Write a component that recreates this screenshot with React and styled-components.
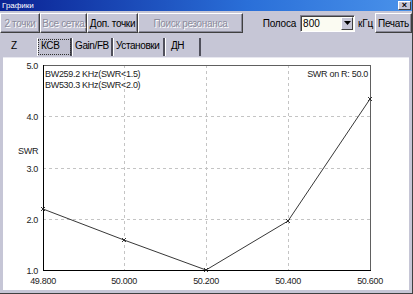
import React from "react";
import styled, { createGlobalStyle } from "styled-components";

const Global = createGlobalStyle`
  html, body { margin: 0; padding: 0; background: #c6c6d6; overflow: hidden; }
  #root { width: 413px; height: 294px; }
`;

const Window = styled.div`
  width: 413px;
  height: 294px;
  box-sizing: border-box;
  display: flex;
  flex-direction: column;
  background: #c6c6d6;
  border-right: 1px solid #404040;
  border-bottom: 1px solid #404040;
  font-family: "Liberation Sans", Arial, sans-serif;
  overflow: hidden;
`;

const TitleBar = styled.div`
  height: 11px;
  flex: none;
  display: flex;
  align-items: center;
  justify-content: space-between;
  padding: 0 1px 0 2px;
  background: linear-gradient(to right, #0a2294, #2a6fd8 60%, #4a92ea);
  color: #fff;
  font-size: 8px;
  line-height: 11px;
`;

const CloseButton = styled.div`
  width: 13px;
  height: 9px;
  box-sizing: border-box;
  background: #c6c6d6;
  border: 1px solid;
  border-color: #fff #404040 #404040 #fff;
  color: #000;
  font-size: 9px;
  font-weight: bold;
  line-height: 7px;
  text-align: center;
`;

const Toolbar = styled.div`
  height: 24px;
  flex: none;
  display: flex;
  align-items: center;
`;

const ToolButton = styled.div`
  width: ${(p) => p.$w}px;
  height: 20px;
  flex: none;
  box-sizing: border-box;
  display: flex;
  align-items: center;
  justify-content: center;
  border: 1px solid;
  border-color: #fff #404040 #404040 #fff;
  box-shadow: inset -1px -1px #8a8a9a;
  font-size: 10px;
  letter-spacing: -0.3px;
  white-space: nowrap;
  color: ${(p) => (p.$disabled ? "#8c8c9c" : "#000")};
  text-shadow: ${(p) => (p.$disabled ? "1px 1px 0 #fff" : "none")};
`;

const Spacer = styled.div`
  flex: 1;
`;

const Label = styled.span`
  font-size: 10px;
  letter-spacing: -0.2px;
  color: #000;
  margin: 0 ${(p) => p.$mr || 0}px 0 ${(p) => p.$ml || 0}px;
  white-space: nowrap;
`;

const Combo = styled.div`
  width: 55px;
  height: 17px;
  box-sizing: border-box;
  display: flex;
  border: 1px solid;
  border-color: #808090 #fff #fff #808090;
  box-shadow: inset 1px 1px #404040;
  background: #fbfbf2;
`;

const ComboText = styled.div`
  flex: 1;
  font-size: 10px;
  line-height: 15px;
  padding-left: 2px;
  color: #000;
`;

const ComboArrow = styled.div`
  width: 12px;
  margin: 1px 1px 1px 0;
  box-sizing: border-box;
  background: #c6c6d6;
  border: 1px solid;
  border-color: #fff #404040 #404040 #fff;
  display: flex;
  align-items: center;
  justify-content: center;
`;

const Tabs = styled.div`
  height: 18px;
  flex: none;
  margin-top: 3px;
  display: flex;
`;

const Tab = styled.div`
  width: ${(p) => p.$w}px;
  flex: none;
  box-sizing: border-box;
  padding-left: ${(p) => p.$pl}px;
  font-size: 10px;
  letter-spacing: -0.4px;
  line-height: 16px;
  white-space: nowrap;
  overflow: hidden;
  color: #000;
  border-right: ${(p) => (p.$sep ? "2px solid #50505c" : "none")};
  border-left: 1px solid ${(p) => (p.$first ? "transparent" : "#fff")};
  outline: ${(p) => (p.$active ? "1px dotted #303030" : "none")};
  outline-offset: -2px;
  background: ${(p) => (p.$active ? "#c0c0d0" : "transparent")};
`;

const Panel = styled.div`
  flex: 1;
  margin: 1px 3px 3px 3px;
  background: #fff;
  border-top: 1px solid #e8e8f0;
  box-sizing: border-box;
`;

const xs = [43, 124, 206, 288, 370];
const ys = [270, 219, 168, 116, 65];
const xLabels = ["49.800", "50.000", "50.200", "50.400", "50.600"];
const yLabels = ["1.0", "2.0", "3.0", "4.0", "5.0"];
const data = [
  [43, 209],
  [124, 240],
  [206, 270],
  [288, 221],
  [370, 99],
];

function Chart() {
  const pts = data.map((d) => d.join(",")).join(" ");
  return (
    <svg width="406" height="232" style={{ display: "block" }}>
      <g
        transform="translate(-3,-58)"
        fontFamily='"Liberation Sans", Arial, sans-serif'
        fontSize="9"
        letterSpacing="-0.3"
        fill="#222"
      >
        {xs.slice(1, 4).map((x) => (
          <line key={x} x1={x + 0.5} y1={65} x2={x + 0.5} y2={270} stroke="#c4c4c4" strokeDasharray="3,3" />
        ))}
        {ys.slice(1, 4).map((y) => (
          <line key={y} x1={43} y1={y + 0.5} x2={370} y2={y + 0.5} stroke="#c4c4c4" strokeDasharray="3,3" />
        ))}
        <rect x="43.5" y="65.5" width="327" height="205" fill="none" stroke="#606060" />
        <line x1="43.5" y1="65" x2="43.5" y2="271" stroke="#000" />
        <line x1="43" y1="270.5" x2="371" y2="270.5" stroke="#000" />
        <polyline points={pts} fill="none" stroke="#202020" strokeWidth="0.9" />
        {data.map(([x, y]) => (
          <path
            key={x}
            d={`M${x - 2},${y - 2}L${x + 2},${y + 2}M${x - 2},${y + 2}L${x + 2},${y - 2}`}
            stroke="#202020"
            strokeWidth="0.9"
          />
        ))}
        {yLabels.map((t, i) => (
          <text key={t} x="38" y={ys[i] + 3.5} textAnchor="end">{t}</text>
        ))}
        <text x="18" y="154">SWR</text>
        {xLabels.map((t, i) => (
          <text key={t} x={xs[i]} y="284" textAnchor="middle">{t}</text>
        ))}
        <text x="45" y="77">BW259.2 KHz(SWR&lt;1.5)</text>
        <text x="45" y="88">BW530.3 KHz(SWR&lt;2.0)</text>
        <text x="368" y="77" textAnchor="end">SWR on R: 50.0</text>
      </g>
    </svg>
  );
}

export default function App() {
  return (
    <>
      <Global />
      <Window>
        <TitleBar>
          <span>Графики</span>
          <CloseButton>×</CloseButton>
        </TitleBar>
        <Toolbar>
          <ToolButton $w={40} $disabled>2 точки</ToolButton>
          <ToolButton $w={47} $disabled>Все сетка</ToolButton>
          <ToolButton $w={51}>Доп. точки</ToolButton>
          <ToolButton $w={105} $disabled>Поиск резонанса</ToolButton>
          <Spacer />
          <Label $mr={4}>Полоса</Label>
          <Combo>
            <ComboText>800</ComboText>
            <ComboArrow>
              <svg width="7" height="4" viewBox="0 0 7 4">
                <path d="M0 0H7L3.5 4Z" fill="#000" />
              </svg>
            </ComboArrow>
          </Combo>
          <Label $ml={3} $mr={2}>кГц</Label>
          <ToolButton $w={37}>Печать</ToolButton>
        </Toolbar>
        <Tabs>
          <Tab $w={37} $pl={10} $first>Z</Tab>
          <Tab $w={35} $pl={3} $active $sep>КСВ</Tab>
          <Tab $w={41} $pl={2} $sep>Gain/FB</Tab>
          <Tab $w={52} $pl={2} $sep>Установки</Tab>
          <Tab $w={36} $pl={5} $sep>ДН</Tab>
        </Tabs>
        <Panel>
          <Chart />
        </Panel>
      </Window>
    </>
  );
}
